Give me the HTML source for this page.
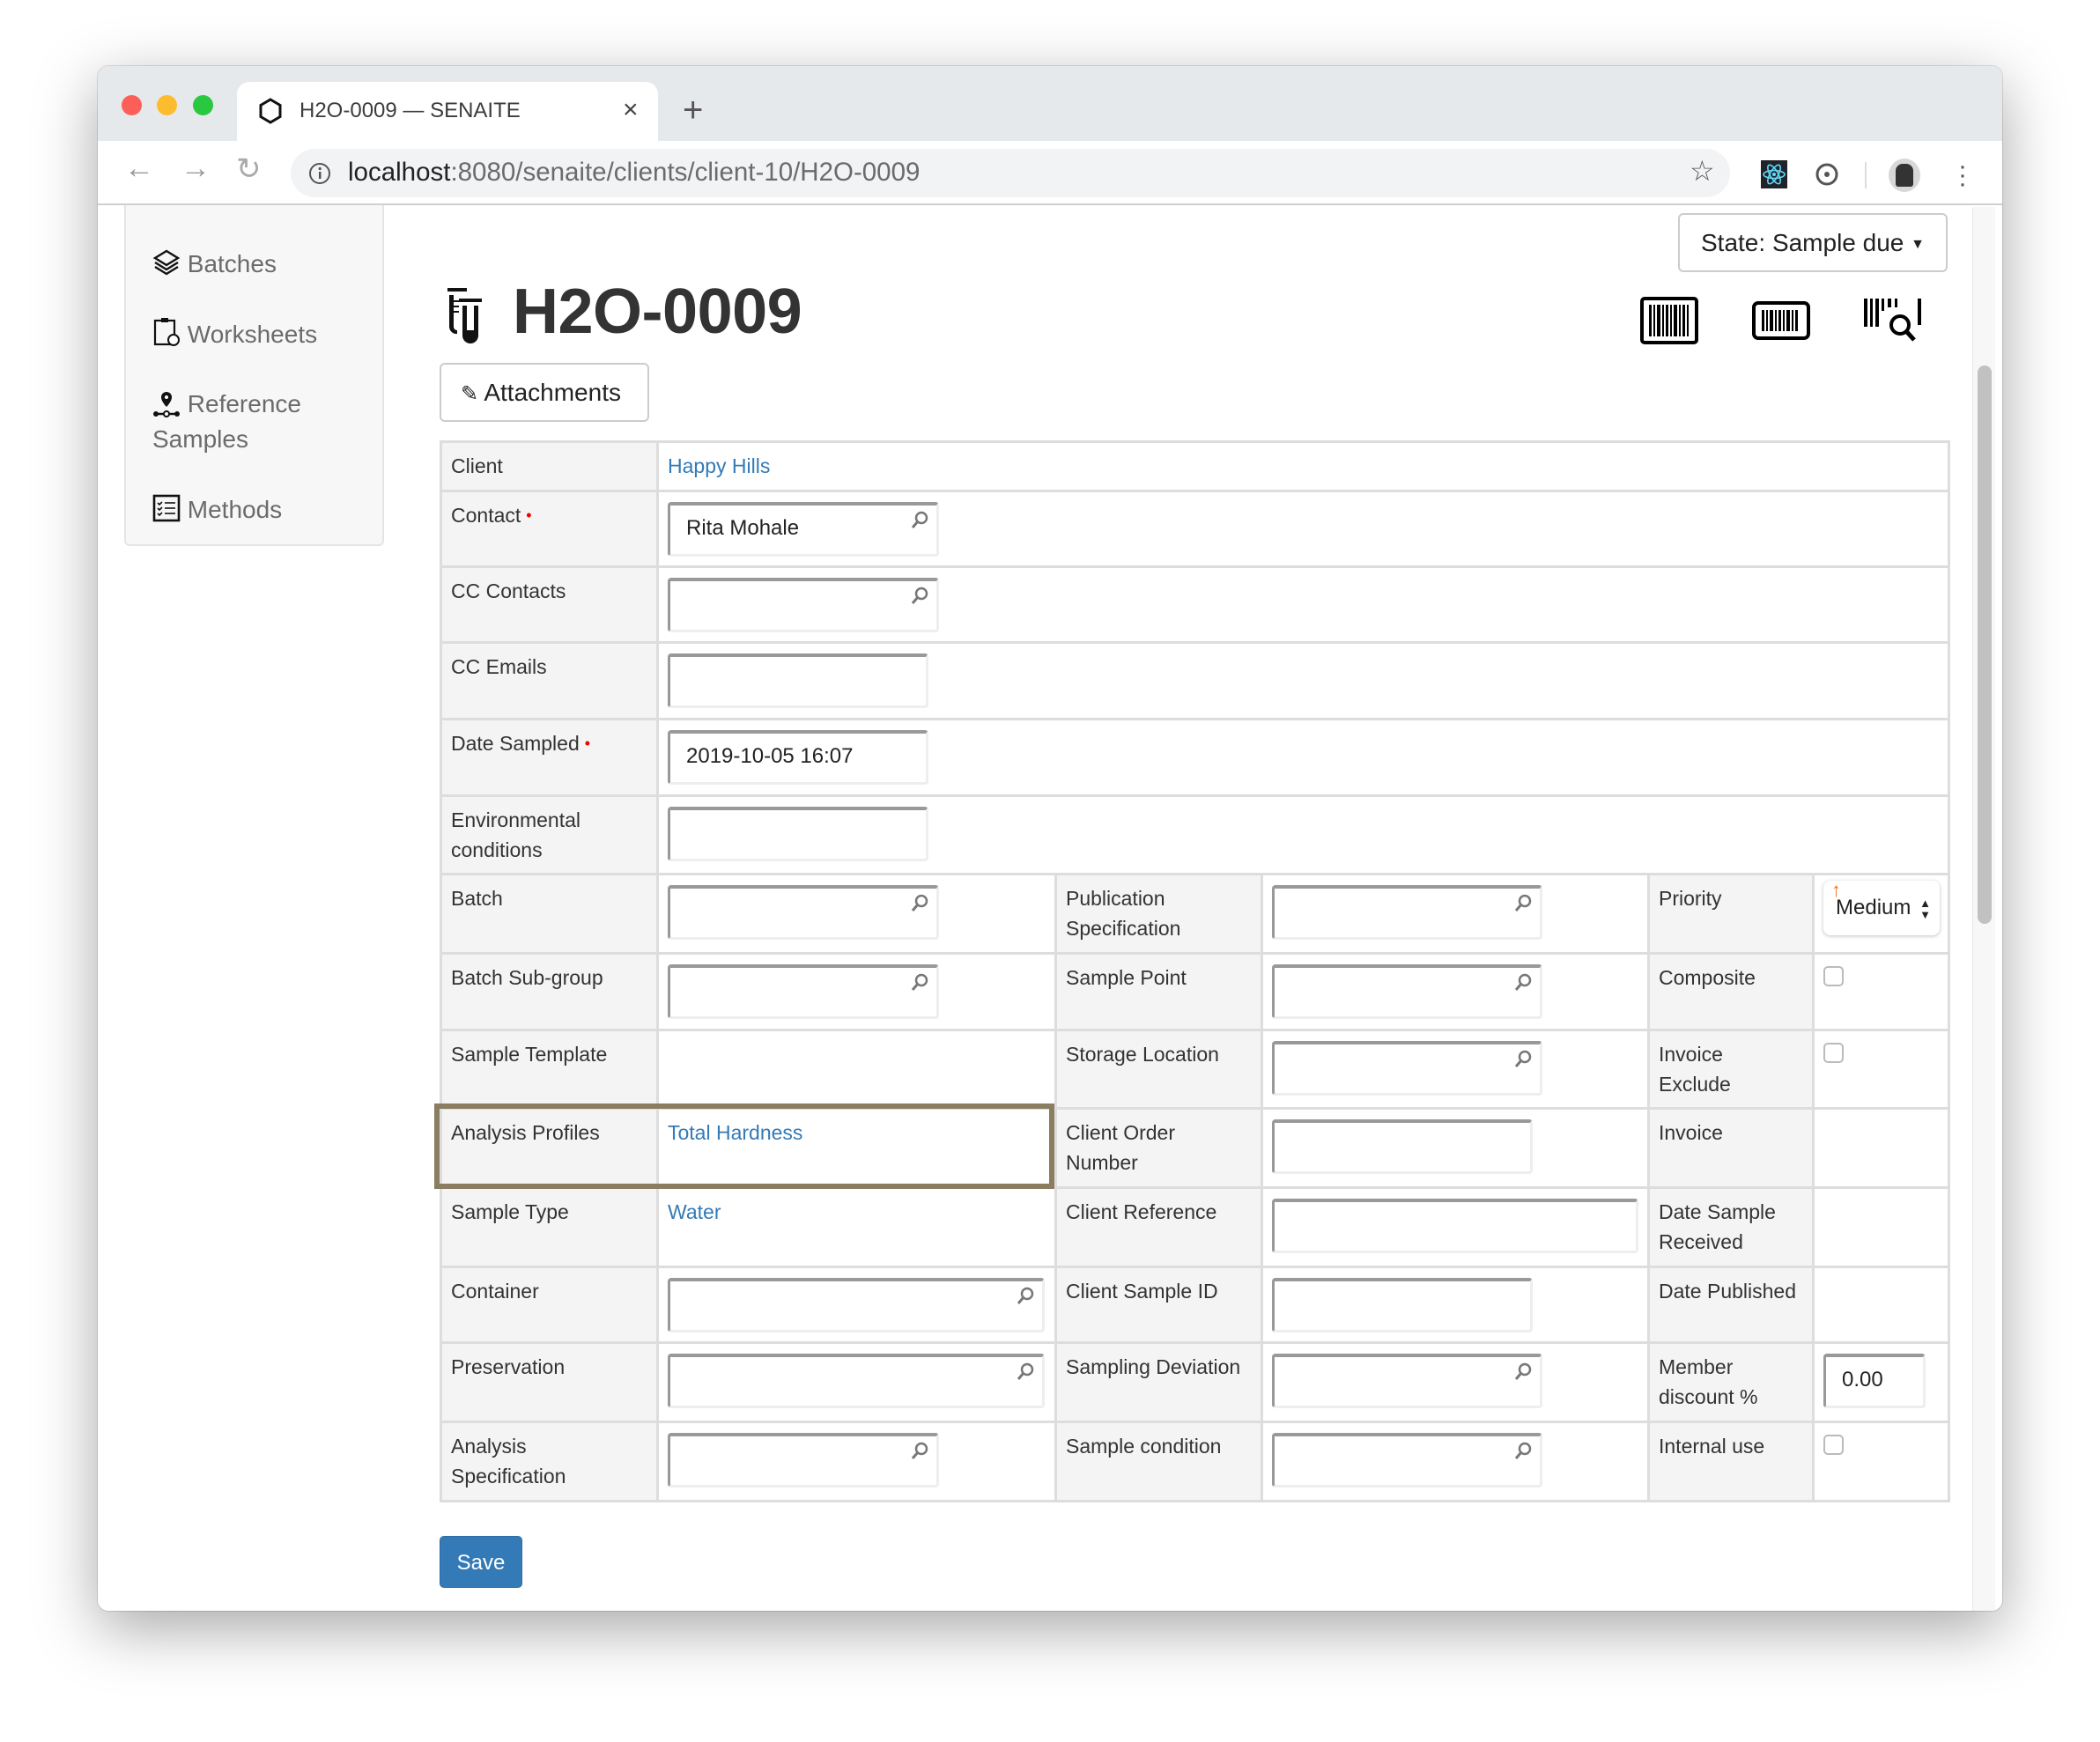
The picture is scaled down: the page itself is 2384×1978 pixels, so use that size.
<!DOCTYPE html>
<html><head><meta charset="utf-8">
<style>
*{box-sizing:border-box;margin:0;padding:0}
body{width:2384px;height:1978px;background:#fff;font-family:"Liberation Sans",Arial,sans-serif;position:relative;overflow:hidden;color:#333}
.win{position:absolute;left:111px;top:75px;width:2162px;height:1754px;border-radius:12px;background:#fff;box-shadow:0 20px 70px rgba(0,0,0,.35),0 0 0 1px rgba(0,0,0,.12);overflow:hidden}
.tabbar{position:absolute;left:0;top:0;width:100%;height:85px;background:#e6e9ec}
.dot{position:absolute;top:33px;width:23px;height:23px;border-radius:50%}
.tab{position:absolute;left:158px;top:18px;width:478px;height:68px;background:#fff;border-radius:14px 14px 0 0}
.toolbar{position:absolute;left:0;top:85px;width:100%;height:73px;background:#fff;border-bottom:2px solid #cfcfcf}
.url{position:absolute;left:219px;top:9px;width:1634px;height:55px;border-radius:28px;background:#f1f3f4}
.abs{position:absolute}
.side{position:absolute;left:30px;top:158px;width:295px;height:387px;background:#f7f7f7;border:2px solid #e5e5e5;border-top:none;border-radius:0 0 6px 6px}
.side div{position:absolute;left:30px;font-size:28px;color:#6b6b6b;line-height:40px}
table{position:absolute;left:388px;top:425px;border-collapse:collapse;table-layout:fixed;width:1712px}
td{border:3px solid #ddd;vertical-align:top;padding:9px 10px;font-size:23px;line-height:34px;color:#333}
td.l{background:#f4f4f4}
a{color:#337ab7;text-decoration:none}
.in{position:relative;height:62px;margin-top:2px;border:3px solid #eee;border-top:4px solid #999;border-left:3px solid #999;border-radius:4px;background:#fff;font-size:24px;line-height:52px;padding-left:18px;color:#222}
.mg{position:absolute;right:8px;top:6px}
.req{color:#e00;font-size:18px;margin-left:6px;vertical-align:top}
.cb{width:23px;height:23px;border:2px solid #bbb;border-radius:5px;margin-top:4px;background:#fff}
</style></head><body>
<div class="win">
 <div class="tabbar">
  <div class="dot" style="left:27px;background:#fc5f57"></div>
  <div class="dot" style="left:67px;background:#fdbc2e"></div>
  <div class="dot" style="left:108px;background:#29c840"></div>
  <div class="tab">
   <svg class="abs" style="left:24px;top:17px" width="28" height="32" viewBox="0 0 28 32"><path d="M14 3 L25 9.5 V22.5 L14 29 L3 22.5 V9.5 Z" fill="none" stroke="#111" stroke-width="3"/></svg>
   <div class="abs" style="left:71px;top:19px;font-size:24px;color:#3c3c3c">H2O-0009 — SENAITE</div>
   <div class="abs" style="left:438px;top:15px;font-size:30px;color:#444">×</div>
  </div>
  <div class="abs" style="left:664px;top:30px;font-size:40px;color:#555;line-height:40px">+</div>
 </div>
 <div class="toolbar">
  <div class="abs" style="left:30px;top:12px;font-size:34px;color:#999">←</div>
  <div class="abs" style="left:94px;top:12px;font-size:34px;color:#999">→</div>
  <div class="abs" style="left:157px;top:12px;font-size:34px;color:#aaa">↻</div>
  <div class="url">
   <svg class="abs" style="left:20px;top:15px" width="26" height="26"><circle cx="13" cy="13" r="11" fill="none" stroke="#555" stroke-width="2"/><rect x="12" y="11" width="2.5" height="8" fill="#555"/><circle cx="13.2" cy="7.5" r="1.6" fill="#555"/></svg>
   <div class="abs" style="left:65px;top:10px;font-size:29.5px;color:#222">localhost<span style="color:#6b6b6b">:8080/senaite/clients/client-10/H2O-0009</span></div>
   <div class="abs" style="left:1588px;top:6px;font-size:32px;color:#555">☆</div>
  </div>
  <div class="abs" style="left:1888px;top:22px;width:30px;height:32px;background:#20232a"><svg width="30" height="32"><g fill="none" stroke="#61dafb" stroke-width="1.6"><ellipse cx="15" cy="16" rx="12" ry="4.5"/><ellipse cx="15" cy="16" rx="12" ry="4.5" transform="rotate(60 15 16)"/><ellipse cx="15" cy="16" rx="12" ry="4.5" transform="rotate(120 15 16)"/></g><circle cx="15" cy="16" r="2" fill="#61dafb"/></svg></div>
  <svg class="abs" style="left:1948px;top:22px" width="30" height="32"><circle cx="15" cy="16" r="11" fill="none" stroke="#555" stroke-width="3"/><circle cx="15" cy="16" r="3" fill="#555"/></svg>
  <div class="abs" style="left:2006px;top:24px;width:2px;height:30px;background:#ddd"></div>
  <div class="abs" style="left:2033px;top:20px;width:36px;height:38px;border-radius:50%;background:#d8d8d8"><div style="margin:6px 8px;width:20px;height:26px;background:#333;border-radius:8px 8px 3px 3px"></div></div>
  <div class="abs" style="left:2112px;top:24px;font-size:30px;color:#555;line-height:10px">·<br>·<br>·</div>
 </div>
 <div class="abs" style="left:0;top:160px;width:100%;height:1594px;background:#fff">
  <div class="abs" style="right:8px;top:0;width:26px;height:100%;background:#f7f7f7;border-left:1px solid #e8e8e8"></div>
  <div class="abs" style="right:12px;top:180px;width:16px;height:634px;background:#c1c1c1;border-radius:8px"></div>
 </div>
 <div class="side" style="top:158px">
  <div style="top:47px"><svg width="32" height="30" viewBox="0 0 32 30" style="vertical-align:-4px"><g fill="none" stroke="#111" stroke-width="2.4"><path d="M16 2 L29 10 L16 18 L3 10 Z"/><path d="M3 15 L16 23 L29 15"/><path d="M3 20 L16 28 L29 20"/></g></svg> Batches</div>
  <div style="top:127px"><svg width="32" height="34" style="vertical-align:-5px"><rect x="3" y="4" width="22" height="27" fill="none" stroke="#111" stroke-width="2.2"/><rect x="10" y="1" width="8" height="5" fill="#111"/><circle cx="24" cy="26" r="6" fill="#fff" stroke="#111" stroke-width="2"/></svg> Worksheets</div>
  <div style="top:206px"><svg width="32" height="32" style="vertical-align:-6px"><path d="M16 3 a6 6 0 0 1 6 6 c0 5 -6 11 -6 11 c0 0 -6 -6 -6 -11 a6 6 0 0 1 6 -6z" fill="#111"/><circle cx="16" cy="9" r="2" fill="#fff"/><line x1="3" y1="28" x2="29" y2="28" stroke="#111" stroke-width="2.5"/><circle cx="4" cy="28" r="3" fill="#111"/><circle cx="16" cy="28" r="3" fill="#fff" stroke="#111" stroke-width="2"/><circle cx="28" cy="28" r="3" fill="#111"/></svg> Reference<br>Samples</div>
  <div style="top:326px"><svg width="32" height="32" style="vertical-align:-5px"><rect x="2" y="2" width="28" height="28" fill="none" stroke="#111" stroke-width="2.6"/><g stroke="#111" stroke-width="1.6"><line x1="14" y1="10" x2="26" y2="10"/><line x1="14" y1="16" x2="26" y2="16"/><line x1="14" y1="22" x2="26" y2="22"/><path d="M6 10 l2 2 l3 -3 M6 16 l2 2 l3 -3 M6 22 l2 2 l3 -3" fill="none"/></g></svg> Methods</div>
 </div>
 <div class="abs" style="left:1794px;top:167px;width:306px;height:67px;border:2px solid #ccc;border-radius:6px;font-size:28px;line-height:63px;padding-left:24px;color:#222">State: Sample due <span style="font-size:16px;vertical-align:3px">▼</span></div>
 <svg class="abs" style="left:395px;top:252px" width="44" height="64" viewBox="0 0 44 64"><g fill="#111"><rect x="2" y="0" width="22" height="4"/><rect x="15" y="12" width="26" height="4"/><path d="M4 8 h5 v36 a4 4 0 0 0 4 4 v4 a8 8 0 0 1 -9 -8z"/><path d="M19 20 h18 v34 a9 9 0 0 1 -18 0z"/><rect x="9" y="14" width="6" height="2"/><rect x="9" y="20" width="6" height="2"/><rect x="9" y="26" width="6" height="2"/></g><rect x="24" y="20" width="8" height="28" fill="#fff"/></svg>
 <div class="abs" style="left:471px;top:238px;font-size:72px;font-weight:bold;color:#333;letter-spacing:-0.5px">H2O-0009</div>
 <svg class="abs" style="left:1751px;top:262px" width="66" height="54"><rect x="2" y="2" width="62" height="50" rx="3" fill="none" stroke="#000" stroke-width="4"/><g fill="#000"><rect x="10" y="9" width="3" height="36"/><rect x="15" y="9" width="2" height="36"/><rect x="19" y="9" width="4" height="36"/><rect x="25" y="9" width="2" height="36"/><rect x="29" y="9" width="3" height="36"/><rect x="34" y="9" width="2" height="36"/><rect x="38" y="9" width="4" height="36"/><rect x="44" y="9" width="2" height="36"/><rect x="48" y="9" width="3" height="36"/><rect x="53" y="9" width="2" height="36"/></g></svg>
 <svg class="abs" style="left:1878px;top:267px" width="66" height="44"><rect x="2" y="2" width="62" height="40" rx="5" fill="none" stroke="#000" stroke-width="4"/><g fill="#000"><rect x="11" y="10" width="3" height="24"/><rect x="16" y="10" width="2" height="24"/><rect x="20" y="10" width="4" height="24"/><rect x="26" y="10" width="2" height="24"/><rect x="30" y="10" width="3" height="24"/><rect x="35" y="10" width="2" height="24"/><rect x="39" y="10" width="4" height="24"/><rect x="45" y="10" width="2" height="24"/><rect x="49" y="10" width="3" height="24"/></g></svg>
 <svg class="abs" style="left:2004px;top:262px" width="70" height="52"><g fill="#000"><rect x="1" y="2" width="4" height="32"/><rect x="8" y="2" width="3" height="32"/><rect x="14" y="2" width="4" height="32"/><rect x="21" y="2" width="3" height="14"/><rect x="28" y="2" width="4" height="10"/><rect x="36" y="2" width="3" height="10"/><rect x="62" y="2" width="4" height="30"/></g><circle cx="42" cy="32" r="10" fill="none" stroke="#000" stroke-width="4"/><line x1="49" y1="39" x2="58" y2="49" stroke="#000" stroke-width="5"/></svg>
 <div class="abs" style="left:388px;top:337px;width:238px;height:67px;border:2px solid #ccc;border-radius:6px;font-size:28px;line-height:63px;padding-left:22px;color:#222"><span style="font-size:24px">✎</span> Attachments</div>

 <table>
  <colgroup><col style="width:246px"><col style="width:452px"><col style="width:234px"><col style="width:439px"><col style="width:187px"><col style="width:154px"></colgroup>
  <tr style="height:56px"><td class="l">Client</td><td colspan="5"><a>Happy Hills</a></td></tr>
  <tr style="height:86px"><td class="l">Contact<span class="req">•</span></td><td colspan="5"><div class="in" style="width:308px">Rita Mohale<svg class="mg" width="22" height="22"><circle cx="13" cy="8" r="6" fill="none" stroke="#777" stroke-width="2.5"/><line x1="9" y1="12" x2="3" y2="19" stroke="#777" stroke-width="3"/></svg></div></td></tr>
  <tr style="height:86px"><td class="l">CC Contacts</td><td colspan="5"><div class="in" style="width:308px"><svg class="mg" width="22" height="22"><circle cx="13" cy="8" r="6" fill="none" stroke="#777" stroke-width="2.5"/><line x1="9" y1="12" x2="3" y2="19" stroke="#777" stroke-width="3"/></svg></div></td></tr>
  <tr style="height:87px"><td class="l">CC Emails</td><td colspan="5"><div class="in" style="width:296px"></div></td></tr>
  <tr style="height:87px"><td class="l">Date Sampled<span class="req">•</span></td><td colspan="5"><div class="in" style="width:296px">2019-10-05 16:07</div></td></tr>
  <tr style="height:89px"><td class="l">Environmental conditions</td><td colspan="5"><div class="in" style="width:296px"></div></td></tr>
  <tr style="height:90px"><td class="l">Batch</td><td><div class="in" style="width:308px"><svg class="mg" width="22" height="22"><circle cx="13" cy="8" r="6" fill="none" stroke="#777" stroke-width="2.5"/><line x1="9" y1="12" x2="3" y2="19" stroke="#777" stroke-width="3"/></svg></div></td><td class="l">Publication Specification</td><td><div class="in" style="width:307px"><svg class="mg" width="22" height="22"><circle cx="13" cy="8" r="6" fill="none" stroke="#777" stroke-width="2.5"/><line x1="9" y1="12" x2="3" y2="19" stroke="#777" stroke-width="3"/></svg></div></td><td class="l">Priority</td><td style="padding-top:6px"><div style="width:132px;height:62px;border-radius:8px;box-shadow:0 1px 4px rgba(0,0,0,.25);position:relative;font-size:24px;line-height:62px;padding-left:14px;color:#222"><span style="position:absolute;left:9px;top:-20px;color:#e87722;font-size:22px;font-weight:bold">↑</span>Medium <span style="font-size:13px;position:absolute;right:10px;top:0;line-height:13px;margin-top:19px">▲<br>▼</span></div></td></tr>
  <tr style="height:87px"><td class="l">Batch Sub-group</td><td><div class="in" style="width:308px"><svg class="mg" width="22" height="22"><circle cx="13" cy="8" r="6" fill="none" stroke="#777" stroke-width="2.5"/><line x1="9" y1="12" x2="3" y2="19" stroke="#777" stroke-width="3"/></svg></div></td><td class="l">Sample Point</td><td><div class="in" style="width:307px"><svg class="mg" width="22" height="22"><circle cx="13" cy="8" r="6" fill="none" stroke="#777" stroke-width="2.5"/><line x1="9" y1="12" x2="3" y2="19" stroke="#777" stroke-width="3"/></svg></div></td><td class="l">Composite</td><td><div class="cb"></div></td></tr>
  <tr style="height:89px"><td class="l">Sample Template</td><td></td><td class="l">Storage Location</td><td><div class="in" style="width:307px"><svg class="mg" width="22" height="22"><circle cx="13" cy="8" r="6" fill="none" stroke="#777" stroke-width="2.5"/><line x1="9" y1="12" x2="3" y2="19" stroke="#777" stroke-width="3"/></svg></div></td><td class="l">Invoice<br>Exclude</td><td><div class="cb"></div></td></tr>
  <tr style="height:90px"><td class="l">Analysis Profiles</td><td><a>Total Hardness</a></td><td class="l">Client Order Number</td><td><div class="in" style="width:296px"></div></td><td class="l">Invoice</td><td></td></tr>
  <tr style="height:90px"><td class="l">Sample Type</td><td><a>Water</a></td><td class="l">Client Reference</td><td><div class="in" style="width:416px"></div></td><td class="l">Date Sample Received</td><td></td></tr>
  <tr style="height:86px"><td class="l">Container</td><td><div class="in" style="width:428px"><svg class="mg" width="22" height="22"><circle cx="13" cy="8" r="6" fill="none" stroke="#777" stroke-width="2.5"/><line x1="9" y1="12" x2="3" y2="19" stroke="#777" stroke-width="3"/></svg></div></td><td class="l">Client Sample ID</td><td><div class="in" style="width:296px"></div></td><td class="l">Date Published</td><td></td></tr>
  <tr style="height:90px"><td class="l">Preservation</td><td><div class="in" style="width:428px"><svg class="mg" width="22" height="22"><circle cx="13" cy="8" r="6" fill="none" stroke="#777" stroke-width="2.5"/><line x1="9" y1="12" x2="3" y2="19" stroke="#777" stroke-width="3"/></svg></div></td><td class="l">Sampling Deviation</td><td><div class="in" style="width:307px"><svg class="mg" width="22" height="22"><circle cx="13" cy="8" r="6" fill="none" stroke="#777" stroke-width="2.5"/><line x1="9" y1="12" x2="3" y2="19" stroke="#777" stroke-width="3"/></svg></div></td><td class="l">Member discount %</td><td><div class="in" style="width:116px;padding-left:18px">0.00</div></td></tr>
  <tr style="height:90px"><td class="l">Analysis<br>Specification</td><td><div class="in" style="width:308px"><svg class="mg" width="22" height="22"><circle cx="13" cy="8" r="6" fill="none" stroke="#777" stroke-width="2.5"/><line x1="9" y1="12" x2="3" y2="19" stroke="#777" stroke-width="3"/></svg></div></td><td class="l">Sample condition</td><td><div class="in" style="width:307px"><svg class="mg" width="22" height="22"><circle cx="13" cy="8" r="6" fill="none" stroke="#777" stroke-width="2.5"/><line x1="9" y1="12" x2="3" y2="19" stroke="#777" stroke-width="3"/></svg></div></td><td class="l">Internal use</td><td><div class="cb"></div></td></tr>
 </table>
 <div class="abs" style="left:382px;top:1178px;width:704px;height:97px;border:6px solid #8b7d5f"></div>
 <div class="abs" style="left:388px;top:1669px;width:94px;height:59px;background:#337ab7;border-radius:5px;color:#fff;font-size:24px;line-height:59px;text-align:center;border:1px solid #2e6da4">Save</div>
</div>
</body></html>
